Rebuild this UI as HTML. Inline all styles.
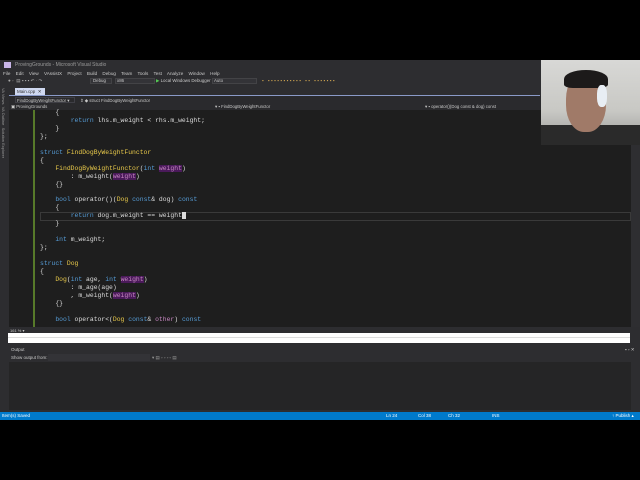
<!DOCTYPE html>
<html><head><meta charset="utf-8"><style>
*{margin:0;padding:0;box-sizing:border-box}
body{width:640px;height:480px;background:#000;position:relative;overflow:hidden;font-family:"Liberation Sans",sans-serif}
.a{position:absolute}
.t{font-size:5px;color:#c8c8c8;white-space:nowrap}
.code{position:absolute;left:40px;top:109px;font-family:"Liberation Mono",monospace;font-size:6.4px;line-height:7.96px;color:#dcdcdc;white-space:pre}
.k{color:#569cd6}.y{color:#e8c94a}.p{color:#c586c0;background:#4a1a5a}
</style></head><body>
<div class="a" style="left:0;top:60px;width:640px;height:360px;background:#2d2d30"></div>
<div class="a" style="left:4px;top:62px;width:7px;height:6px;background:#c9b6e8"></div>
<div class="a t" style="left:15px;top:62px;color:#999">ProvingGrounds - Microsoft Visual Studio</div>
<div class="a t" style="left:3px;top:71px;font-size:4.6px;word-spacing:4px">File Edit View VAssistX Project Build Debug Team Tools Test Analyze Window Help</div>
<div class="a t" style="left:8px;top:78px;font-size:4.6px;color:#aaa">● ◦ &nbsp;▤ ▪ ▪ ▪ ↶ · ↷ &nbsp;&nbsp;</div>
<div class="a" style="left:90px;top:78px;width:22px;height:6px;background:#333337;border:1px solid #434346"></div>
<div class="a t" style="left:93px;top:78px;font-size:4.4px">Debug</div>
<div class="a" style="left:115px;top:78px;width:40px;height:6px;background:#333337;border:1px solid #434346"></div>
<div class="a t" style="left:117px;top:78px;font-size:4.4px">x86</div>
<div class="a t" style="left:156px;top:78px;font-size:4.4px"><span style="color:#5c5">▶</span> Local Windows Debugger ▾</div>
<div class="a" style="left:212px;top:78px;width:45px;height:6px;background:#333337;border:1px solid #434346"></div>
<div class="a t" style="left:214px;top:78px;font-size:4.4px">Auto</div>
<div class="a t" style="left:262px;top:78px;font-size:4.6px;color:#c8a050;letter-spacing:1.5px">▪ ▪▪▪▪▪▪▪▪▪▪▪ ▪▪ ▪▪▪▪▪▪▪</div>
<div class="a" style="left:0;top:86px;width:8px;height:240px;background:#2d2d30"></div>
<div class="a t" style="left:1px;top:88px;writing-mode:vertical-rl;font-size:4px;color:#999">VA Views &nbsp;VA Outline &nbsp;Solution Explorer</div>
<div class="a" style="left:15px;top:88px;width:30px;height:7px;background:#cfd8f0"></div>
<div class="a t" style="left:17px;top:88.5px;font-size:4.5px;color:#333">Main.cpp &nbsp;✕</div>
<div class="a" style="left:9px;top:95px;width:531px;height:1px;background:#8a9ac8"></div>
<div class="a" style="left:9px;top:96px;width:631px;height:14px;background:#2a2a2d"></div>
<div class="a" style="left:15px;top:97px;width:60px;height:6px;border:1px solid #3f3f46"></div>
<div class="a t" style="left:17px;top:97.5px;font-size:4.3px">FindDogByWeightFunctor ▾</div>
<div class="a t" style="left:80px;top:97.5px;font-size:4.3px">⇕ ◆ struct FindDogByWeightFunctor</div>
<div class="a t" style="left:11px;top:103.5px;font-size:4.3px">▣ ProvingGrounds</div>
<div class="a t" style="left:215px;top:103.5px;font-size:4.3px">▾ ▪ FindDogByWeightFunctor</div>
<div class="a t" style="left:425px;top:103.5px;font-size:4.3px">▾ ▪ operator()(Dog const &amp; dog) const</div>
<div class="a" style="left:9px;top:110px;width:622px;height:217px;background:#1e1e1e"></div>
<div class="a" style="left:631px;top:110px;width:9px;height:217px;background:#2e2e31"></div>
<div class="a" style="left:33px;top:110px;width:2px;height:217px;background:#577a2a"></div>
<div class="a" style="left:40px;top:212px;width:591px;height:9px;border:1px solid #3a3a3a"></div>
<div class="code">    {
        <span class="k">return</span> lhs.m_weight &lt; rhs.m_weight;
    }
};

<span class="k">struct</span> <span class="y">FindDogByWeightFunctor</span>
{
    <span class="y">FindDogByWeightFunctor</span>(<span class="k">int</span> <span class="p">weight</span>)
        : m_weight(<span class="p">weight</span>)
    {}

    <span class="k">bool</span> operator()(<span class="y">Dog</span> <span class="k">const</span>&amp; dog) <span class="k">const</span>
    {
        <span class="k">return</span> dog.m_weight == weight<span style="background:#ddd">&nbsp;</span>
    }

    <span class="k">int</span> m_weight;
};

<span class="k">struct</span> <span class="y">Dog</span>
{
    <span class="y">Dog</span>(<span class="k">int</span> age, <span class="k">int</span> <span class="p">weight</span>)
        : m_age(age)
        , m_weight(<span class="p">weight</span>)
    {}

    <span class="k">bool</span> operator&lt;(<span class="y">Dog</span> <span class="k">const</span>&amp; <span class="p" style="background:none">other</span>) <span class="k">const</span></div>
<div class="a" style="left:541px;top:60px;width:99px;height:85px;background:linear-gradient(180deg,#d8d8d6 0%,#c8c8c4 60%,#9a9a98 100%)"></div>
<div class="a" style="left:541px;top:125px;width:99px;height:20px;background:#2a2a2a"></div>
<div class="a" style="left:566px;top:72px;width:40px;height:60px;border-radius:45%;background:#a07a68"></div>
<div class="a" style="left:564px;top:70px;width:44px;height:18px;border-radius:50% 50% 20% 20%;background:#1c1a1a"></div>
<div class="a" style="left:597px;top:85px;width:10px;height:22px;border-radius:40%;background:#e8eef4"></div>
<div class="a t" style="left:10px;top:327.5px;font-size:4px">161 % ▾</div>
<div class="a" style="left:8px;top:333px;width:622px;height:10px;background:#fff"></div>
<div class="a" style="left:8px;top:337px;width:622px;height:1px;background:#ddd"></div>
<div class="a t" style="left:11px;top:347px;font-size:4.5px">Output</div>
<div class="a t" style="left:625px;top:347px;font-size:4.5px">▪ ▫ ✕</div>
<div class="a t" style="left:11px;top:355px;font-size:4.5px">Show output from:</div>
<div class="a" style="left:48px;top:354px;width:102px;height:7px;background:#333337"></div>
<div class="a t" style="left:152px;top:355px;font-size:4.5px;color:#999">▾ ▤ ▫ ▫ ▫ ▫ ▤</div>
<div class="a" style="left:9px;top:362px;width:622px;height:48px;background:#252526"></div>
<div class="a" style="left:0;top:412px;width:640px;height:8px;background:#007acc"></div>
<div class="a t" style="left:2px;top:413px;font-size:4.5px;color:#fff">Item(s) Saved</div>
<div class="a t" style="left:386px;top:413px;font-size:4.5px;color:#fff">Ln 24</div>
<div class="a t" style="left:418px;top:413px;font-size:4.5px;color:#fff">Col 38</div>
<div class="a t" style="left:448px;top:413px;font-size:4.5px;color:#fff">Ch 32</div>
<div class="a t" style="left:492px;top:413px;font-size:4.5px;color:#fff">INS</div>
<div class="a t" style="left:612px;top:413px;font-size:4.5px;color:#fff">↑ Publish ▴</div>
</body></html>
